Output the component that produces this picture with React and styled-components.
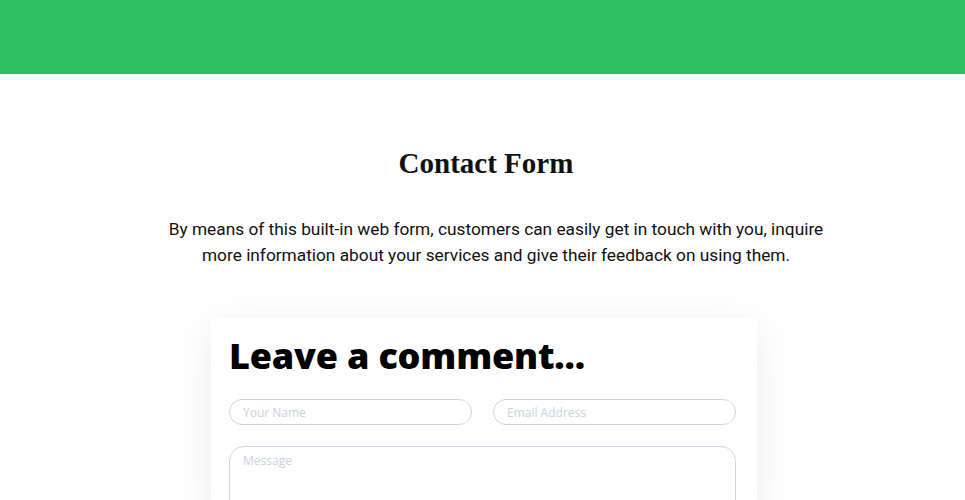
import React from "react";
import styled, { createGlobalStyle } from "styled-components";

const Global = createGlobalStyle`
  html, body { margin: 0; padding: 0; background: #fff; }
  body { overflow: hidden; }
`;

const Page = styled.div`
  width: 965px;
  height: 500px;
  overflow: hidden;
  display: flex;
  flex-direction: column;
`;

const Header = styled.header`
  height: 74px;
  background: #2ebf63;
  flex-shrink: 0;
`;

const Section = styled.section`
  display: flex;
  flex-direction: column;
  align-items: center;
  padding-top: 72px;
`;

const Title = styled.h2`
  margin: 0 0 0 7px;
  font-family: "Liberation Serif", "DejaVu Serif", serif;
  font-weight: bold;
  font-size: 29px;
  line-height: 34px;
  color: #111;
`;

const Lead = styled.p`
  margin: 36px 0 0 27px;
  width: 670px;
  text-align: center;
  font-family: "Roboto", sans-serif;
  font-size: 17.3px;
  line-height: 26px;
  color: #111;
`;

const Card = styled.div`
  margin: 50px 0 0 3px;
  width: 546px;
  height: 200px;
  background: #fff;
  box-shadow: 0 10px 40px rgba(0, 0, 0, 0.08);
  padding: 18px 21px 0 18px;
  box-sizing: border-box;
`;

const CardTitle = styled.h3`
  margin: 0;
  font-family: "Open Sans", sans-serif;
  font-weight: 800;
  font-size: 36px;
  line-height: 40px;
  color: #000;
  letter-spacing: -0.2px;
`;

const Row = styled.div`
  display: grid;
  grid-template-columns: 1fr 1fr;
  gap: 21px;
  margin-top: 23px;
`;

const Field = styled.div`
  height: ${(p) => (p.$area ? "80px" : "26px")};
  margin-top: ${(p) => (p.$area ? "21px" : "0")};
  border: 1.5px solid #cdd7e2;
  border-radius: ${(p) => (p.$area ? "15px" : "13px")};
  box-sizing: border-box;
  padding: ${(p) => (p.$area ? "5px 13px" : "0 13px")};
  display: flex;
  align-items: ${(p) => (p.$area ? "flex-start" : "center")};
  font-family: "Open Sans", sans-serif;
  font-size: 12px;
  color: #c9d3df;
`;

export default function App() {
  return (
    <Page>
      <Global />
      <Header />
      <Section>
        <Title>Contact Form</Title>
        <Lead>
          By means of this built-in web form, customers can easily get in touch with you, inquire
          more information about your services and give their feedback on using them.
        </Lead>
        <Card>
          <CardTitle>Leave a comment...</CardTitle>
          <Row>
            <Field>Your Name</Field>
            <Field>Email Address</Field>
          </Row>
          <Field $area>Message</Field>
        </Card>
      </Section>
    </Page>
  );
}
